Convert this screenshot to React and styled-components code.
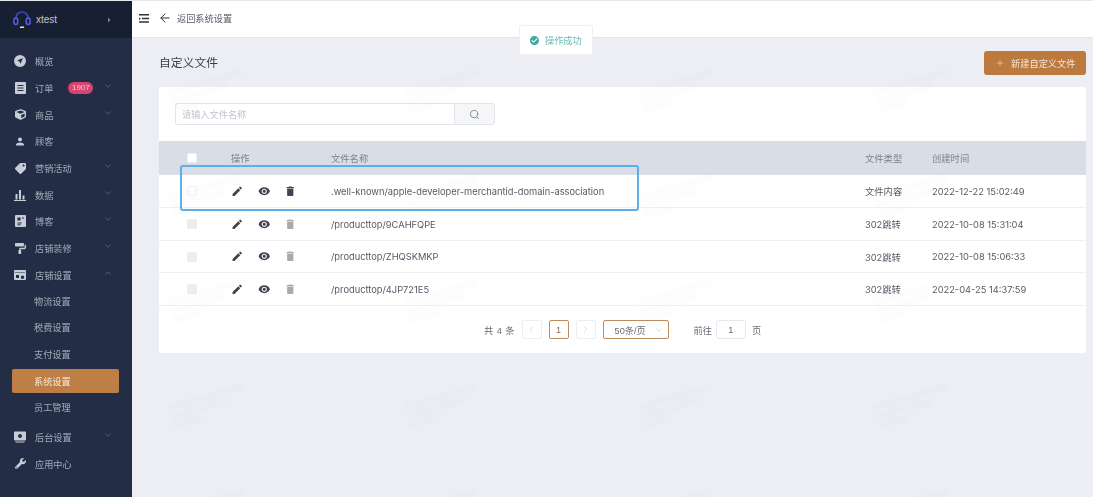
import React from 'react';
import styled, { createGlobalStyle } from 'styled-components';
import { MdEdit, MdVisibility, MdDelete, MdPerson, MdCheckCircle, MdArrowRight } from 'react-icons/md';
import { FaWrench, FaTag, FaPaintRoller, FaCube } from 'react-icons/fa';
import { ChevronDown, ChevronUp, ChevronLeft, ChevronRight, Search, Plus, ArrowLeft } from 'lucide-react';

const Global = createGlobalStyle`
  html, body { margin: 0; padding: 0; height: 100%; background: #eceef3; }
  body { font-family: "Inter", "Liberation Sans", "Noto Sans CJK SC", sans-serif; overflow: hidden; }
  #root { height: 100%; }
  * { box-sizing: border-box; }
`;
const CJK = '"Liberation Sans", "Noto Sans CJK SC", sans-serif';

const Page = styled.div`display: flex; width: 1093px; height: 497px; overflow: hidden; position: relative; border-top: 1px solid #e6e8ee; filter: blur(0.35px);`;
const Side = styled.aside`width: 132px; flex: none; background: #232e46; color: #a4abb9; display: flex; flex-direction: column;`;
const Brand = styled.div`height: 37px; background: #171f32; display: flex; align-items: center; padding: 0 17px 0 13px; color: #c3c7d0; font-size: 10px; font-family: ${CJK};`;
const BrandName = styled.span`margin-left: 5px; flex: 1;`;
const Nav = styled.nav`padding-top: 10px; display: flex; flex-direction: column;`;
const Item = styled.div`height: 26.7px; display: flex; align-items: center; padding-left: 14px; font-size: 9.2px; font-family: ${CJK}; color: #a4abb9; position: relative;`;
const IconBox = styled.span`width: 12px; height: 12px; display: flex; align-items: center; justify-content: center; margin-right: 9px; color: #c8ccd4; font-size: 12px; flex: none;`;
const Flip = styled.span`display: flex; transform: scaleX(-1);`;
const Caret = styled.span`position: absolute; left: 103px; top: 50%; transform: translateY(-50%); display: flex; color: #6e778a; margin-top: -2px;`;
const Badge = styled.span`margin-left: 15px; background: #d9436f; color: #f3c9d6; font-size: 8px; border-radius: 6px; width: 25px; text-align: center; height: 12px; line-height: 12px;`;
const SubItem = styled.div`height: 24px; margin: 1.35px 13px 1.35px 12px; padding-left: 22px; display: flex; align-items: center; font-size: 9.2px; font-family: ${CJK}; border-radius: 2px; color: ${p => p.$on ? '#f6e6d6' : '#a4abb9'}; background: ${p => p.$on ? '#bd7f45' : 'transparent'};`;
const SubList = styled.div`display: flex; flex-direction: column; margin: -1px 0 3px;`;

const Main = styled.main`flex: 1; display: flex; flex-direction: column; min-width: 0;`;
const Top = styled.header`height: 37px; background: #fff; border-bottom: 1px solid #e3e5ea; display: flex; align-items: center; padding: 0 0 2px 7px; font-size: 9.2px; font-family: ${CJK}; color: #555b66;`;
const TopIcon = styled.span`display: flex; color: #2b2f36; margin-right: ${p => p.$m || 0}px;`;
const Content = styled.div`padding: 13px 7px 0 27px; flex: 1;`;
const TitleRow = styled.div`display: flex; align-items: center; justify-content: space-between; height: 24px; margin-bottom: 12px;`;
const Title = styled.h1`margin: 0 0 4px; font-size: 11.8px; font-weight: 400; color: #3a3f49; font-family: ${CJK};`;
const NewBtn = styled.button`width: 102px; height: 24px; border: 0; border-radius: 3px; background: #bd7a3f; color: #f5e6d6; font-size: 9.2px; font-family: ${CJK}; display: flex; align-items: center; justify-content: center; gap: 4px; padding: 0;`;
const Card = styled.section`background: #fff; height: 266px; border-radius: 2px; padding-top: 16px;`;
const SearchRow = styled.div`display: flex; margin: 0 0 16px 16px; width: 320px; height: 22px;`;
const SearchInput = styled.div`flex: 1; border: 1px solid #e2e4e9; border-right: 0; border-radius: 3px 0 0 3px; padding-left: 6px; display: flex; align-items: center; color: #c0c4cc; font-size: 9.2px; font-family: ${CJK};`;
const SearchBtn = styled.div`width: 41px; border: 1px solid #e2e4e9; border-radius: 0 3px 3px 0; background: #f5f6f8; display: flex; align-items: center; justify-content: center; color: #6f7580;`;
const Row = styled.div`display: grid; grid-template-columns: 72px 100px 534px 67px 1fr; align-items: center; height: ${p => p.$h}px; font-size: 9.3px; color: ${p => p.$head ? '#7c828e' : '#555b66'}; background: ${p => p.$head ? '#d9dde6' : '#fff'}; border-bottom: ${p => p.$head ? '0' : '1px solid #eef0f3'}; font-family: "Inter", "Noto Sans CJK SC", sans-serif;`;
const CheckCell = styled.div`padding-left: 28px; display: flex;`;
const Check = styled.span`width: 10px; height: 10px; border-radius: 1.5px; display: block; background: ${p => p.$k === 'off' ? '#eceded' : '#fff'}; border: 1px solid ${p => p.$k === 'off' ? '#eceded' : '#eef0f3'};`;
const Ops = styled.div`display: flex; align-items: center; gap: 14px; font-size: 12.5px; color: #3f4452;`;
const Op = styled.span`display: flex; width: 12.5px; justify-content: center; color: ${p => p.$dim ? '#a8aaac' : '#3f4452'};`;
const Highlight = styled.div`position: absolute; left: 180px; top: 164px; width: 459px; height: 46px; border: 2px solid #5cafe9; border-radius: 3px; pointer-events: none;`;
const Toast = styled.div`position: absolute; left: 519px; top: 24px; width: 74px; height: 30px; background: #fff; border: 1px solid #eef0f3; border-radius: 2px; display: flex; align-items: center; padding-left: 9px; gap: 5px; color: #6fb9b3; font-size: 9.2px; font-family: ${CJK};`;
const ToastIcon = styled.span`display: flex; color: #4aa7a3; font-size: 11px;`;
const Pager = styled.div`display: flex; align-items: center; justify-content: center; height: 47px; font-size: 9.2px; color: #666c76; font-family: ${CJK};`;
const PageBox = styled.span`width: 20px; height: 19px; border: 1px solid ${p => p.$on ? '#bd8a5c' : '#eceef1'}; border-radius: 2px; display: flex; align-items: center; justify-content: center; color: ${p => p.$on ? '#8a6a4c' : '#c0c4cc'}; font-size: 9px; margin-right: 7px;`;
const SizeSel = styled.span`width: 66px; height: 19px; border: 1px solid #bd8a5c; border-radius: 2px; display: flex; align-items: center; padding-left: 11px; justify-content: space-between; padding-right: 4px; margin-right: 25px;`;
const SizeArrow = styled.span`display: flex; color: #c0c4cc;`;
const Total = styled.span`margin-right: 7px; word-spacing: 1px;`;
const JumpBox = styled.span`width: 30px; height: 19px; border: 1px solid #e7e9ed; border-radius: 3px; display: flex; align-items: center; justify-content: center; margin: 0 6px 0 4px;`;
const Watermarks = styled.div`position: absolute; left: 132px; top: 37px; right: 0; bottom: 0; overflow: hidden; pointer-events: none; display: grid; grid-template-columns: repeat(5, 235px); grid-auto-rows: 105px; padding-left: 38px;`;
const Mark = styled.div`align-self: center; justify-self: start; width: 76px; display: flex; flex-direction: column; gap: 3px; transform: rotate(-16deg); filter: blur(1.6px);`;
const MarkBar = styled.span`display: block; height: 6px; width: ${p => p.$w}px; background: rgba(120, 126, 142, 0.022);`;

const Logo = () => (
  <svg width="18" height="18" viewBox="0 0 18 18" fill="none">
    <path d="M3 8V6.500a6 5.500 0 0 1 12 0V8" stroke="#4347b8" strokeWidth="1.7" />
    <rect x="0.9" y="7" width="3.800" height="6.500" rx="1.900" stroke="#5a5fe0" strokeWidth="1.500" />
    <rect x="13.300" y="7" width="3.800" height="6.500" rx="1.900" stroke="#5a5fe0" strokeWidth="1.500" />
    <rect x="6.800" y="15.500" width="4.400" height="1.500" rx=".75" fill="#e6e8ee" />
  </svg>
);
const Menu = () => (
  <svg width="10" height="9" viewBox="0 0 10 9"><path fill="#333" d="M0 0h10v1.500H0zM3 3.700h7v1.500H3zM0 3.500l2 1.200-2 1.200zM0 7.300h10v1.500H0z" /></svg>
);
const Compass = () => (
  <svg width="12" height="12" viewBox="0 0 12 12"><path fill="currentColor" fillRule="evenodd" d="M6 0a6 6 0 1 1 0 12A6 6 0 0 1 6 0zm3 3L3 5.600l2.500.9.900 2.500z" /></svg>
);
const Doc = () => (
  <svg width="11" height="12" viewBox="0 0 11 12"><path fill="currentColor" fillRule="evenodd" d="M1 0h9a1 1 0 0 1 1 1v10a1 1 0 0 1-1 1H1a1 1 0 0 1-1-1V1a1 1 0 0 1 1-1zm1.500 3v1h6V3zm0 2.500v1h6v-1zm0 2.500v1h6V8z" /></svg>
);
const Blog = () => (
  <svg width="11" height="12" viewBox="0 0 11 12"><path fill="currentColor" fillRule="evenodd" d="M1 0h9a1 1 0 0 1 1 1v10a1 1 0 0 1-1 1H1a1 1 0 0 1-1-1V1a1 1 0 0 1 1-1zm1.500 2.500v3h3v-3zm4.500 0v1h2v-1zm-4.500 5v1h4v-1zM2.500 9.300v.9h3v-.9z" /></svg>
);
const Bars = () => (
  <svg width="12" height="12" viewBox="0 0 12 12"><path fill="currentColor" d="M1.500 5h2v5.500h-2zM5 1h2v9.500H5zM8.500 6.500h2v4h-2zM0 11h12v1H0z" /></svg>
);
const Store = () => (
  <svg width="12" height="12" viewBox="0 0 12 12"><path fill="currentColor" fillRule="evenodd" d="M1 1h10a1 1 0 0 1 1 1v8a1 1 0 0 1-1 1H1a1 1 0 0 1-1-1V2a1 1 0 0 1 1-1zm0 2.500V4h10v-.5zM2 6v3h3V6zm6.500.5a1.700 1.700 0 1 0 0 3.400 1.700 1.700 0 0 0 0-3.400z" /></svg>
);
const Monitor = () => (
  <svg width="12" height="12" viewBox="0 0 12 12"><path fill="currentColor" fillRule="evenodd" d="M1 .5h10a1 1 0 0 1 1 1v7a1 1 0 0 1-1 1H1a1 1 0 0 1-1-1v-7a1 1 0 0 1 1-1zM6 3a2 2 0 1 0 0 4 2 2 0 0 0 0-4zM1.500 10.500h9v1h-9z" /></svg>
);

const down = <Caret><ChevronDown size={10} strokeWidth={1.6} /></Caret>;
const rows = [
  ['.well-known/apple-developer-merchantid-domain-association', '文件内容', '2022-12-22 15:02:49', 'on', 33],
  ['/producttop/9CAHFQPE', '302跳转', '2022-10-08 15:31:04', 'off', 33],
  ['/producttop/ZHQSKMKP', '302跳转', '2022-10-08 15:06:33', 'off', 32],
  ['/producttop/4JP721E5', '302跳转', '2022-04-25 14:37:59', 'off', 33],
];
const marks = Array.from({ length: 25 }, (_, i) => i);

export default function App() {
  return (
    <Page>
      <Global />
      <Side>
        <Brand><Logo /><BrandName>xtest</BrandName><MdArrowRight size={12} color="#7c8494" /></Brand>
        <Nav>
          <Item><IconBox><Compass /></IconBox>概览</Item>
          <Item><IconBox><Doc /></IconBox>订单<Badge>1907</Badge>{down}</Item>
          <Item><IconBox><FaCube size={11} /></IconBox>商品{down}</Item>
          <Item><IconBox><MdPerson size={17} /></IconBox>顾客</Item>
          <Item><IconBox><Flip><FaTag size={11} /></Flip></IconBox>营销活动{down}</Item>
          <Item><IconBox><Bars /></IconBox>数据{down}</Item>
          <Item><IconBox><Blog /></IconBox>博客{down}</Item>
          <Item><IconBox><FaPaintRoller size={11} /></IconBox>店铺装修{down}</Item>
          <Item><IconBox><Store /></IconBox>店铺设置<Caret><ChevronUp size={10} strokeWidth={1.6} /></Caret></Item>
          <SubList>
            <SubItem>物流设置</SubItem>
            <SubItem>税费设置</SubItem>
            <SubItem>支付设置</SubItem>
            <SubItem $on>系统设置</SubItem>
            <SubItem>员工管理</SubItem>
          </SubList>
          <Item><IconBox><Monitor /></IconBox>后台设置{down}</Item>
          <Item><IconBox><FaWrench size={11} /></IconBox>应用中心</Item>
        </Nav>
      </Side>
      <Main>
        <Top>
          <TopIcon $m={9}><Menu /></TopIcon>
          <TopIcon $m={5}><ArrowLeft size={14} strokeWidth={1.7} /></TopIcon>
          返回系统设置
        </Top>
        <Content>
          <TitleRow>
            <Title>自定义文件</Title>
            <NewBtn><Plus size={10} strokeWidth={1.3} />&nbsp;新建自定义文件</NewBtn>
          </TitleRow>
          <Card>
            <SearchRow>
              <SearchInput>请输入文件名称</SearchInput>
              <SearchBtn><Search size={11} strokeWidth={1.7} /></SearchBtn>
            </SearchRow>
            <Row $head $h={34}>
              <CheckCell><Check $k="head" /></CheckCell>
              <div>操作</div><div>文件名称</div><div>文件类型</div><div>创建时间</div>
            </Row>
            {rows.map(([name, type, time, chk, h], i) => (
              <Row key={name} $h={h}>
                <CheckCell><Check $k={chk} /></CheckCell>
                <Ops>
                  <Op><MdEdit /></Op><Op><MdVisibility /></Op><Op $dim={i > 0}><MdDelete /></Op>
                </Ops>
                <div>{name}</div><div>{type}</div><div>{time}</div>
              </Row>
            ))}
            <Pager>
              <Total>共 4 条</Total>
              <PageBox><ChevronLeft size={9} strokeWidth={1.5} /></PageBox>
              <PageBox $on>1</PageBox>
              <PageBox><ChevronRight size={9} strokeWidth={1.5} /></PageBox>
              <SizeSel>50条/页<SizeArrow><ChevronDown size={10} strokeWidth={1.3} /></SizeArrow></SizeSel>
              前往<JumpBox>1</JumpBox>页
            </Pager>
          </Card>
        </Content>
      </Main>
      <Watermarks aria-hidden="true">
        {marks.map(i => <Mark key={i}><MarkBar $w={76} /><MarkBar $w={58} /><MarkBar $w={30} /></Mark>)}
      </Watermarks>
      <Highlight />
      <Toast><ToastIcon><MdCheckCircle /></ToastIcon>操作成功</Toast>
    </Page>
  );
}
